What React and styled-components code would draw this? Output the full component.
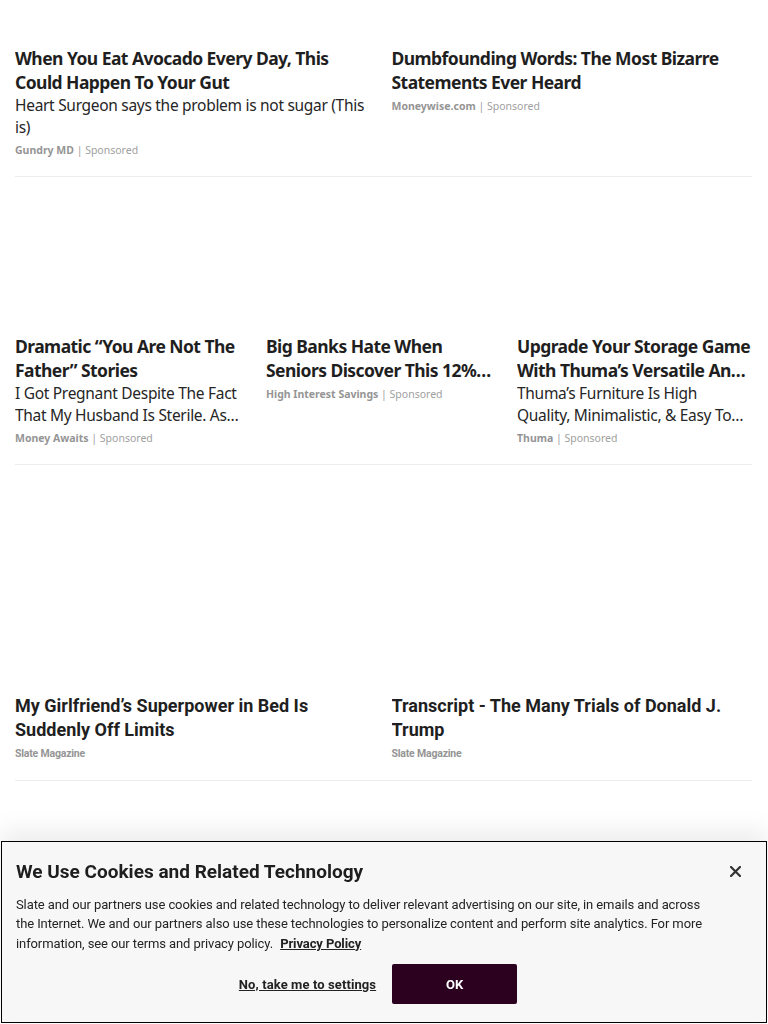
import React from 'react'
import styled, { createGlobalStyle } from 'styled-components'

const GlobalStyle = createGlobalStyle`
  html, body {
    margin: 0;
    padding: 0;
    background: #fff;
    font-family: "Noto Sans", "Open Sans", sans-serif;
    color: #1a1a1a;
  }
`

const slateFont = 'Roboto, "Liberation Sans", sans-serif'

const Feed = styled.main`
  padding: 0 16px 0 15px;
  overflow: hidden;
  height: 1024px;
`

const Row = styled.section`
  display: grid;
  grid-template-columns: repeat(${p => p.$cols}, 1fr);
  column-gap: 16px;
  padding: ${p => (p.$first ? '0' : '15px')} 0 18px;
  border-bottom: 1px solid #ededed;
`

const Card = styled.article`
  display: flex;
  flex-direction: column;
  min-width: 0;
`

const Thumb = styled.div`
  aspect-ratio: 16 / 9;
  background: #fff;
  margin-bottom: ${p => (p.$wide ? '11px' : '10px')};
  ${p => p.$height && `aspect-ratio: auto; height: ${p.$height}px;`}
`

const Title = styled.h3`
  margin: 0;
  font-family: ${p => (p.$slate ? slateFont : '"Noto Sans", "Open Sans", sans-serif')};
  font-weight: 700;
  font-size: ${p => (p.$slate ? '18px' : '17.5px')};
  line-height: 24px;
  letter-spacing: ${p => (p.$slate ? '0' : '-0.55px')};
  color: #1f1f1f;
  display: -webkit-box;
  -webkit-line-clamp: 2;
  -webkit-box-orient: vertical;
  overflow: hidden;
`

const Desc = styled.p`
  margin: 0;
  font-size: 15.5px;
  line-height: 22px;
  letter-spacing: -0.3px;
  color: #262626;
  display: -webkit-box;
  -webkit-line-clamp: 2;
  -webkit-box-orient: vertical;
  overflow: hidden;
`

const Meta = styled.div`
  margin-top: 4px;
  font-size: 10.5px;
  line-height: 16px;
  color: #9a9a9a;
  font-family: ${p => (p.$slate ? slateFont : '"Noto Sans", sans-serif')};
  letter-spacing: ${p => (p.$slate ? '-0.2px' : '0')};

  b {
    font-weight: 700;
    color: #959595;
  }
  span {
    color: #a0a0a0;
  }
`

const Banner = styled.div`
  position: fixed;
  left: 1px;
  right: 1px;
  bottom: 1px;
  background: #f7f7f7;
  border: 1.5px solid #000;
  box-shadow: 0 -12px 22px rgba(0, 0, 0, 0.07);
  padding: 18px 14px 18px 14px;
  font-family: ${slateFont};
  color: #222;
`

const BannerHead = styled.div`
  display: flex;
  align-items: center;
  justify-content: space-between;
`

const BannerTitle = styled.h2`
  margin: 0;
  font-size: 19px;
  line-height: 24px;
  font-weight: 700;
  letter-spacing: 0;
  color: #1e1e1e;
`

const Close = styled.button`
  border: none;
  background: none;
  padding: 0;
  margin-right: 10px;
  width: 14px;
  height: 14px;
  display: flex;
  align-items: center;
  justify-content: center;
  cursor: pointer;
`

const BannerText = styled.p`
  margin: 11px 0 0;
  font-size: 13px;
  line-height: 19.5px;
  letter-spacing: -0.1px;
  color: #242424;
  padding-right: 40px;

  a {
    margin-left: 4px;
    font-weight: 700;
    color: #222;
    text-decoration: underline;
  }
`

const Actions = styled.div`
  display: flex;
  justify-content: center;
  align-items: center;
  gap: 16px;
  margin-top: 11px;
  padding-right: 12px;
`

const LinkButton = styled.button`
  border: none;
  background: none;
  font-family: inherit;
  font-size: 13px;
  font-weight: 700;
  letter-spacing: 0.1px;
  color: #222;
  text-decoration: underline;
  cursor: pointer;
  padding: 0;
`

const OkButton = styled.button`
  width: 125px;
  height: 40px;
  border: none;
  border-radius: 2px;
  background: #2c0120;
  color: #fff;
  font-family: inherit;
  font-size: 13px;
  font-weight: 700;
  cursor: pointer;
`

const rows = [
  {
    cols: 2,
    first: true,
    items: [
      {
        title: 'When You Eat Avocado Every Day, This Could Happen To Your Gut',
        desc: 'Heart Surgeon says the problem is not sugar (This is)',
        source: 'Gundry MD',
        sponsored: true,
      },
      {
        title: 'Dumbfounding Words: The Most Bizarre Statements Ever Heard',
        source: 'Moneywise.com',
        sponsored: true,
      },
    ],
  },
  {
    cols: 3,
    items: [
      {
        title: 'Dramatic \u201cYou Are Not The Father\u201d Stories',
        desc: 'I Got Pregnant Despite The Fact That My Husband Is Sterile. As Unbelievable As It Sounds',
        source: 'Money Awaits',
        sponsored: true,
      },
      {
        title: 'Big Banks Hate When Seniors Discover This 12% Savings Account',
        source: 'High Interest Savings',
        sponsored: true,
      },
      {
        title: 'Upgrade Your Storage Game With Thuma\u2019s Versatile And Stylish Nightstand',
        desc: 'Thuma\u2019s Furniture Is High Quality, Minimalistic, & Easy To Assemble',
        source: 'Thuma',
        sponsored: true,
      },
    ],
  },
  {
    cols: 2,
    items: [
      {
        title: 'My Girlfriend\u2019s Superpower in Bed Is Suddenly Off Limits',
        source: 'Slate Magazine',
        slate: true,
      },
      {
        title: 'Transcript - The Many Trials of Donald J. Trump',
        source: 'Slate Magazine',
        slate: true,
      },
    ],
  },
  {
    cols: 2,
    items: [
      { title: '', source: '', slate: true },
      { title: '', source: '', slate: true },
    ],
  },
]

const App = () => {
  return (
    <>
      <GlobalStyle />
      <Feed>
        {rows.map((row, i) => (
          <Row key={i} $cols={row.cols} $first={row.first}>
            {row.items.map((item, j) => (
              <Card key={j}>
                <Thumb $height={row.first ? 36 : undefined} $wide={!row.first && row.cols === 2} />
                <Title $slate={item.slate}>{item.title}</Title>
                {item.desc && <Desc>{item.desc}</Desc>}
                <Meta $slate={item.slate}>
                  <b>{item.source}</b>
                  {item.sponsored && <span> | Sponsored</span>}
                </Meta>
              </Card>
            ))}
          </Row>
        ))}
      </Feed>

      <Banner>
        <BannerHead>
          <BannerTitle>We Use Cookies and Related Technology</BannerTitle>
          <Close aria-label="Close">
            <svg width="11" height="11" viewBox="0 0 11 11">
              <path d="M1 1 L10 10 M10 1 L1 10" stroke="#333" strokeWidth="2.2" strokeLinecap="square" />
            </svg>
          </Close>
        </BannerHead>
        <BannerText>
          Slate and our partners use cookies and related technology to deliver relevant advertising on our site, in emails and across
          the Internet. We and our partners also use these technologies to personalize content and perform site analytics. For more
          information, see our terms and privacy policy. <a href="#">Privacy Policy</a>
        </BannerText>
        <Actions>
          <LinkButton>No, take me to settings</LinkButton>
          <OkButton>OK</OkButton>
        </Actions>
      </Banner>
    </>
  )
}

export default App
